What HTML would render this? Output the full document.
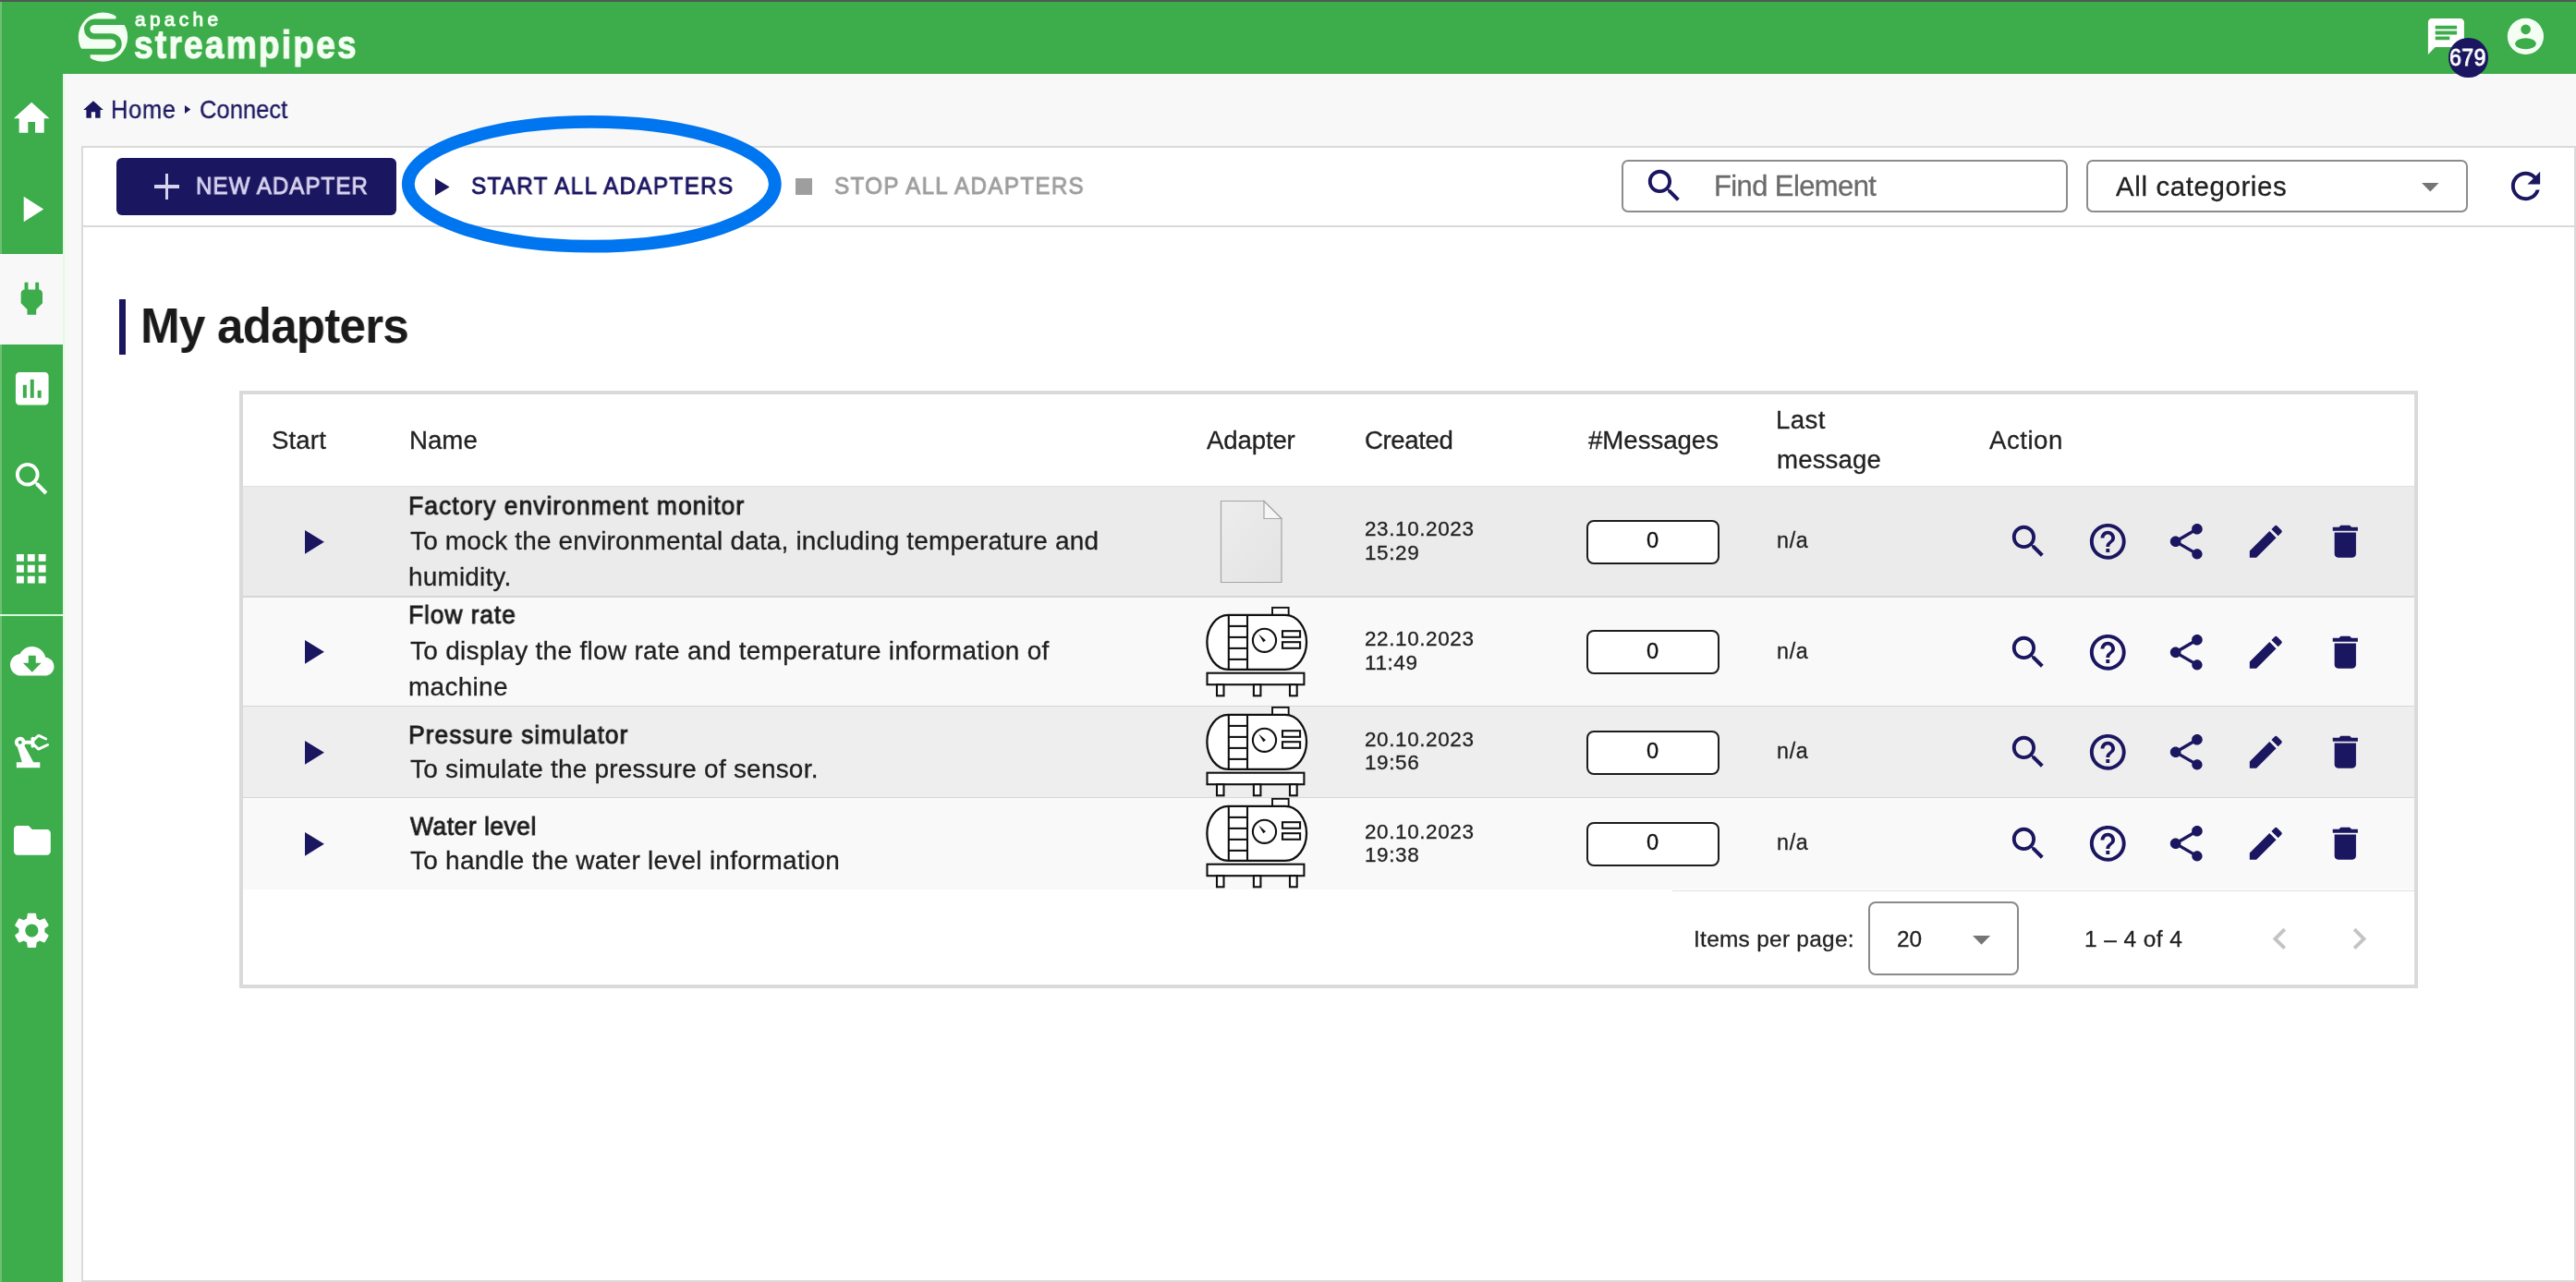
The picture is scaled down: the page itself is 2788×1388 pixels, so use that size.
<!DOCTYPE html>
<html><head><meta charset="utf-8"><style>
html,body{margin:0;padding:0;}
body{width:2788px;height:1388px;position:relative;overflow:hidden;background:#f8f8f8;font-family:"Liberation Sans",sans-serif;}
.t{position:absolute;white-space:nowrap;will-change:transform;}
.b{position:absolute;box-sizing:border-box;}
.ic{position:absolute;overflow:visible;}
</style></head><body>
<!-- header -->
<div class="b" style="left:0;top:0;width:2788px;height:80px;background:#3dac4a"></div>
<div class="b" style="left:0;top:0;width:2788px;height:2px;background:#4f5a52"></div>
<!-- sidebar -->
<div class="b" style="left:0;top:80px;width:68px;height:1308px;background:#3dac4a"></div>
<div class="b" style="left:0;top:2px;width:2px;height:1386px;background:#6cc074"></div>
<div class="b" style="left:0;top:275px;width:68px;height:98px;background:#f8f8f8"></div>
<div class="b" style="left:0;top:665px;width:68px;height:2px;background:#d4fcd8"></div>
<div class="b" style="left:68px;top:80px;width:1.5px;height:1308px;background:#e2fbe4"></div>
<!-- logo -->
<svg class="ic" style="left:80px;top:8px;width:64px;height:64px" viewBox="80 8 64 64">
 <circle cx="111.5" cy="40.1" r="26.7" fill="#f4fff4"/>
 <path d="M145 23.75 H101.7 A7.83 7.83 0 0 0 101.7 39.4 H120.3 A8.3 8.3 0 0 1 120.3 56 H78" fill="none" stroke="#3dac4a" stroke-width="6.3"/>
 <path d="M125.5 12 V21.6 H140 V12 Z M97.7 59 V70 H80 V59 Z" fill="#3dac4a"/>
</svg>
<svg class="ic" style="left:2709.7px;top:15.5px;width:46.8px;height:46.8px" viewBox="0 0 24 24">
 <circle cx="12" cy="12" r="10.05" fill="#f4fff4"/><circle cx="12.1" cy="8.1" r="2.75" fill="#3dac4a"/><ellipse cx="12.05" cy="16.05" rx="5.85" ry="3.1" fill="#3dac4a"/>
</svg>
<!-- card -->
<div class="b" style="left:88px;top:158px;width:2700px;height:1230px;background:#fff;border:2px solid #dadada"></div>
<div class="b" style="left:90px;top:244px;width:2696px;height:2px;background:#dadada"></div>
<!-- new adapter -->
<div class="b" style="left:125.7px;top:171px;width:303.8px;height:61.7px;border-radius:6px;background:#1b1660"></div>
<div class="b" style="left:166.7px;top:200.3px;width:27.3px;height:3.4px;background:#d6d3ef"></div>
<div class="b" style="left:178.7px;top:188px;width:3.4px;height:27.9px;background:#d6d3ef"></div>
<svg class="ic" style="left:471.2px;top:192.6px;width:15.6px;height:18.8px" viewBox="0 0 15.6 18.8"><path d="M0 0 V18.8 L15.6 9.4 Z" fill="#1b1660"/></svg>
<div class="b" style="left:861px;top:193px;width:17.6px;height:17.8px;background:#9e9e9e"></div>
<!-- search & select -->
<div class="b" style="left:1755px;top:173px;width:483px;height:57.2px;border:2px solid #8c8c8c;border-radius:7px"></div>
<div class="b" style="left:2258px;top:173px;width:413px;height:57.4px;border:2px solid #8c8c8c;border-radius:7px"></div>
<svg class="ic" style="left:2621px;top:198px;width:18.6px;height:9.4px" viewBox="0 0 18.6 9.4"><path d="M0 0 H18.6 L9.3 9.4 Z" fill="#757575"/></svg>
<!-- breadcrumb arrow -->
<svg class="ic" style="left:200.4px;top:114.4px;width:6.3px;height:9.1px" viewBox="0 0 6.3 9.1"><path d="M0 0 V9.1 L6.3 4.55 Z" fill="#1b1660"/></svg>
<!-- heading bar -->
<div class="b" style="left:129px;top:324px;width:7.2px;height:60px;background:#1b1660"></div>
<!-- table card -->
<div class="b" style="left:259px;top:423px;width:2358px;height:647px;background:#fff;border:4px solid #dadada"></div>
<div class="b" style="left:263px;top:526px;width:2350px;height:1px;background:#e0e0e0"></div>
<div class="b" style="left:263px;top:527px;width:2350px;height:119px;background:#ebebeb"></div>
<div class="b" style="left:263px;top:645px;width:2350px;height:2px;background:#d6d6d6"></div>
<svg class="ic" style="left:329.9px;top:573.65px;width:20.9px;height:25.7px" viewBox="0 0 20.9 25.7"><path d="M0 0 V25.7 L20.9 12.85 Z" fill="#1b1660"/></svg>
<div class="b" style="left:1717px;top:562.50px;width:143.7px;height:48px;background:#fff;border:2.2px solid #1c1c1c;border-radius:8px"></div>
<div class="b" style="left:263px;top:647px;width:2350px;height:118px;background:#f9f9f9"></div>
<div class="b" style="left:263px;top:764px;width:2350px;height:2px;background:#d6d6d6"></div>
<svg class="ic" style="left:329.9px;top:693.15px;width:20.9px;height:25.7px" viewBox="0 0 20.9 25.7"><path d="M0 0 V25.7 L20.9 12.85 Z" fill="#1b1660"/></svg>
<div class="b" style="left:1717px;top:682.00px;width:143.7px;height:48px;background:#fff;border:2.2px solid #1c1c1c;border-radius:8px"></div>
<div class="b" style="left:263px;top:765px;width:2350px;height:99px;background:#eeeeee"></div>
<div class="b" style="left:263px;top:863px;width:2350px;height:2px;background:#d6d6d6"></div>
<svg class="ic" style="left:329.9px;top:801.65px;width:20.9px;height:25.7px" viewBox="0 0 20.9 25.7"><path d="M0 0 V25.7 L20.9 12.85 Z" fill="#1b1660"/></svg>
<div class="b" style="left:1717px;top:790.50px;width:143.7px;height:48px;background:#fff;border:2.2px solid #1c1c1c;border-radius:8px"></div>
<div class="b" style="left:263px;top:864px;width:2350px;height:99px;background:#f9f9f9"></div>
<svg class="ic" style="left:329.9px;top:900.65px;width:20.9px;height:25.7px" viewBox="0 0 20.9 25.7"><path d="M0 0 V25.7 L20.9 12.85 Z" fill="#1b1660"/></svg>
<div class="b" style="left:1717px;top:889.50px;width:143.7px;height:48px;background:#fff;border:2.2px solid #1c1c1c;border-radius:8px"></div>
<div class="b" style="left:1810px;top:963.5px;width:2803px;height:1.5px;background:#e0e0e0;width:803px"></div>
<div class="b" style="left:2022.4px;top:976px;width:162.7px;height:79.6px;border:2px solid #8a8a8a;border-radius:8px"></div>
<svg class="ic" style="left:2135px;top:1013.4px;width:19.1px;height:9.7px" viewBox="0 0 19.1 9.7"><path d="M0 0 H19.1 L9.55 9.7 Z" fill="#757575"/></svg>
<svg class="ic" style="left:1321px;top:542px;width:67px;height:90px" viewBox="0 0 67 90">
<defs><linearGradient id="dg" x1="0" y1="0" x2="1" y2="1"><stop offset="0" stop-color="#ededed"/><stop offset="1" stop-color="#e3e3e3"/></linearGradient></defs>
<path d="M0.5 0.5 H47 L66 19.5 V88.5 H0.5 Z" fill="url(#dg)" stroke="#a6a6a6" stroke-width="1.2"/>
<path d="M47 0.5 V19.5 H66 Z" fill="#f6f6f6" stroke="#a6a6a6" stroke-width="1.2"/>
</svg>
<svg class="ic" style="left:1295px;top:649.6px;width:125px;height:110px" viewBox="0 0 125 110" fill="none" stroke="#111" stroke-width="2.3">
<rect x="82.05" y="7.85" width="17.6" height="9" fill="#fff" stroke-width="1.9"/>
<path d="M34.35 15.85 H96.05 A23 29.5 0 0 1 96.05 74.85 H34.35 A23 29.5 0 0 1 34.35 15.85 Z" fill="#fff"/>
<g stroke-width="2.1"><line x1="34.8" y1="16" x2="34.8" y2="75"/><line x1="55" y1="16" x2="55" y2="75"/>
<line x1="34.8" y1="27.9" x2="55" y2="27.9"/><line x1="34.8" y1="39.9" x2="55" y2="39.9"/><line x1="34.8" y1="51.9" x2="55" y2="51.9"/><line x1="34.8" y1="63.9" x2="55" y2="63.9"/>
<circle cx="73.5" cy="43.3" r="12.6"/>
<rect x="93" y="33.2" width="19.1" height="6.6"/>
<rect x="93" y="45.2" width="19.1" height="6.6"/>
<rect x="11.5" y="78.7" width="104.9" height="12.5" fill="#fff"/>
<rect x="22" y="91.2" width="7.5" height="12.1" fill="#fff"/>
<rect x="61.9" y="91.2" width="7.5" height="12.1" fill="#fff"/>
<rect x="101" y="91.2" width="7.7" height="12.1" fill="#fff"/></g>
<path d="M67.2 36.6 L72.3 45.2 L75 43.2 Z" fill="#111" stroke="none"/>
</svg>
<svg class="ic" style="left:1295px;top:758.1px;width:125px;height:110px" viewBox="0 0 125 110" fill="none" stroke="#111" stroke-width="2.3">
<rect x="82.05" y="7.85" width="17.6" height="9" fill="#fff" stroke-width="1.9"/>
<path d="M34.35 15.85 H96.05 A23 29.5 0 0 1 96.05 74.85 H34.35 A23 29.5 0 0 1 34.35 15.85 Z" fill="#fff"/>
<g stroke-width="2.1"><line x1="34.8" y1="16" x2="34.8" y2="75"/><line x1="55" y1="16" x2="55" y2="75"/>
<line x1="34.8" y1="27.9" x2="55" y2="27.9"/><line x1="34.8" y1="39.9" x2="55" y2="39.9"/><line x1="34.8" y1="51.9" x2="55" y2="51.9"/><line x1="34.8" y1="63.9" x2="55" y2="63.9"/>
<circle cx="73.5" cy="43.3" r="12.6"/>
<rect x="93" y="33.2" width="19.1" height="6.6"/>
<rect x="93" y="45.2" width="19.1" height="6.6"/>
<rect x="11.5" y="78.7" width="104.9" height="12.5" fill="#fff"/>
<rect x="22" y="91.2" width="7.5" height="12.1" fill="#fff"/>
<rect x="61.9" y="91.2" width="7.5" height="12.1" fill="#fff"/>
<rect x="101" y="91.2" width="7.7" height="12.1" fill="#fff"/></g>
<path d="M67.2 36.6 L72.3 45.2 L75 43.2 Z" fill="#111" stroke="none"/>
</svg>
<svg class="ic" style="left:1295px;top:857.1px;width:125px;height:110px" viewBox="0 0 125 110" fill="none" stroke="#111" stroke-width="2.3">
<rect x="82.05" y="7.85" width="17.6" height="9" fill="#fff" stroke-width="1.9"/>
<path d="M34.35 15.85 H96.05 A23 29.5 0 0 1 96.05 74.85 H34.35 A23 29.5 0 0 1 34.35 15.85 Z" fill="#fff"/>
<g stroke-width="2.1"><line x1="34.8" y1="16" x2="34.8" y2="75"/><line x1="55" y1="16" x2="55" y2="75"/>
<line x1="34.8" y1="27.9" x2="55" y2="27.9"/><line x1="34.8" y1="39.9" x2="55" y2="39.9"/><line x1="34.8" y1="51.9" x2="55" y2="51.9"/><line x1="34.8" y1="63.9" x2="55" y2="63.9"/>
<circle cx="73.5" cy="43.3" r="12.6"/>
<rect x="93" y="33.2" width="19.1" height="6.6"/>
<rect x="93" y="45.2" width="19.1" height="6.6"/>
<rect x="11.5" y="78.7" width="104.9" height="12.5" fill="#fff"/>
<rect x="22" y="91.2" width="7.5" height="12.1" fill="#fff"/>
<rect x="61.9" y="91.2" width="7.5" height="12.1" fill="#fff"/>
<rect x="101" y="91.2" width="7.7" height="12.1" fill="#fff"/></g>
<path d="M67.2 36.6 L72.3 45.2 L75 43.2 Z" fill="#111" stroke="none"/>
</svg>
<svg class="ic" style="left:11.30px;top:105.20px;width:46.40px;height:46.40px" viewBox="0 0 24 24"><path fill="#ffffff" d="M10 20v-6h4v6h5v-8h3L12 3 2 12h3v8z"/></svg>
<svg class="ic" style="left:10.10px;top:203.20px;width:47.00px;height:47.00px" viewBox="0 0 24 24"><path fill="#ffffff" d="M8 5v14l11-7z"/></svg>
<svg class="ic" style="left:10.50px;top:300.20px;width:46.70px;height:46.70px" viewBox="0 0 24 24"><path fill="#3dac4a" d="M16.01 7L16 3h-2v4h-4V3H8v4h-.01C7 6.99 6 7.99 6 8.99v5.49L9.5 18v3h5v-3l3.5-3.51v-5.5c0-1-1-2-1.99-1.99z"/></svg>
<svg class="ic" style="left:10.50px;top:397.40px;width:47.50px;height:47.50px" viewBox="0 0 24 24"><path fill="#ffffff" d="M19 3H5c-1.1 0-2 .9-2 2v14c0 1.1.9 2 2 2h14c1.1 0 2-.9 2-2V5c0-1.1-.9-2-2-2zM9 17H7v-7h2v7zm4 0h-2V7h2v10zm4 0h-2v-4h2v4z"/></svg>
<svg class="ic" style="left:10.50px;top:494.60px;width:47.30px;height:47.30px" viewBox="0 0 24 24"><path fill="#ffffff" d="M15.5 14h-.79l-.28-.27C15.41 12.59 16 11.11 16 9.5 16 5.910 13.09 3 9.5 3S3 5.91 3 9.5 5.91 16 9.5 16c1.61 0 3.09-.59 4.23-1.570l.27.28v.79l5 4.99L20.49 19l-4.99-5zm-6 0C7.01 14 5 11.99 5 9.5S7.01 5 9.5 5 14 7.01 14 9.5 11.99 14 9.5 14z"/></svg>
<svg class="ic" style="left:10.40px;top:592.10px;width:47.50px;height:47.50px" viewBox="0 0 24 24"><path fill="#ffffff" d="M4 8h4V4H4v4zm6 12h4v-4h-4v4zm-6 0h4v-4H4v4zm0-6h4v-4H4v4zm6 0h4v-4h-4v4zm6-10v4h4V4h-4zm-6 4h4V4h-4v4zm6 6h4v-4h-4v4zm0 6h4v-4h-4v4z"/></svg>
<svg class="ic" style="left:10.50px;top:691.80px;width:47.50px;height:47.50px" viewBox="0 0 24 24"><path fill="#ffffff" d="M19.35 10.04C18.67 6.59 15.64 4 12 4 9.11 4 6.6 5.64 5.35 8.04 2.34 8.36 0 10.91 0 14c0 3.310 2.69 6 6 6h13c2.76 0 5-2.24 5-5 0-2.64-2.05-4.78-4.65-4.96zM17 13l-5 5-5-5h3V9h4v4h3z"/></svg>
<svg class="ic" style="left:10.40px;top:789.60px;width:47.00px;height:47.00px" viewBox="0 0 24 24"><path fill="#ffffff" d="M19.93 8.21l-3.6 1.68L14 7.7V6.3l2.33-2.19 3.6 1.68c.38.18.82.01 1-.36.18-.38.01-.82-.36-1L16.65 2.6c-.38-.18-.83-.1-1.130.2l-1.74 1.6c-.18-.24-.46-.4-.78-.4-.55 0-1 .45-1 1v1H8.82C8.34 4.65 6.98 3.73 5.4 4.07c-1.16.25-2.15 1.25-2.36 2.43-.22 1.32.46 2.47 1.48 3.08L7.08 18H4v3h13v-3h-3.62L8.41 8.77c.17-.24.31-.49.41-.77H12v1c0 .55.45 1 1 1 .32 0 .6-.16.78-.4l1.74 1.6c.3.3.75.38 1.13.2l4.92-2.3c.37-.17.54-.62.36-1-.18-.37-.62-.54-1-.36zM6 8c-.55 0-1-.45-1-1s.45-1 1-1 1 .45 1 1-.45 1-1 1z"/></svg>
<svg class="ic" style="left:10.50px;top:886.00px;width:47.80px;height:47.80px" viewBox="0 0 24 24"><path fill="#ffffff" d="M10 4H4c-1.1 0-1.99.9-1.99 2L2 18c0 1.1.9 2 2 2h16c1.1 0 2-.9 2-2V8c0-1.1-.9-2-2-2h-8l-2-2z"/></svg>
<svg class="ic" style="left:10.90px;top:984.10px;width:46.80px;height:46.80px" viewBox="0 0 24 24"><path fill="#ffffff" d="M19.14 12.94c.04-.3.06-.61.06-.94 0-.32-.02-.64-.07-.94l2.03-1.58c.18-.14.23-.41.12-.61l-1.92-3.32c-.12-.22-.37-.29-.59-.22l-2.39.96c-.5-.38-1.03-.7-1.62-.94l-.36-2.54c-.04-.24-.24-.41-.48-.41h-3.84c-.24 0-.43.17-.47.41l-.36 2.54c-.59.24-1.13.57-1.62.94l-2.39-.96c-.22-.08-.47 0-.59.22L2.74 8.87c-.12.21-.08.47.12.61l2.03 1.58c-.05.3-.09.63-.09.94s.02.64.07.94l-2.03 1.58c-.18.14-.23.41-.12.61l1.92 3.32c.12.22.37.29.59.22l2.39-.96c.5.38 1.03.7 1.62.94l.36 2.54c.05.24.24.41.48.41h3.84c.24 0 .44-.17.47-.41l.36-2.54c.59-.24 1.13-.56 1.62-.94l2.39.96c.22.08.47 0 .59-.22l1.92-3.32c.12-.22.07-.47-.12-.61l-2.01-1.58zM12 15.6c-1.98 0-3.6-1.62-3.6-3.6s1.62-3.6 3.6-3.6 3.6 1.62 3.6 3.6-1.62 3.6-3.6 3.6z"/></svg>
<svg class="ic" style="left:2624.00px;top:16.00px;width:46.80px;height:46.80px" viewBox="0 0 24 24"><path fill="#ffffff" d="M20 2H4c-1.1 0-1.99.9-1.99 2L2 22l4-4h14c1.1 0 2-.9 2-2V4c0-1.1-.9-2-2-2zM6 9h12v2H6V9zm8 5H6v-2h8v2zm4-6H6V6h12v2z"/></svg>
<svg class="ic" style="left:88.00px;top:105.60px;width:26.00px;height:26.00px" viewBox="0 0 24 24"><path fill="#1b1660" d="M10 20v-6h4v6h5v-8h3L12 3 2 12h3v8z"/></svg>
<svg class="ic" style="left:1777.90px;top:178.20px;width:46.60px;height:46.60px" viewBox="0 0 24 24"><path fill="#1b1660" d="M15.5 14h-.79l-.28-.27C15.41 12.59 16 11.11 16 9.5 16 5.910 13.09 3 9.5 3S3 5.91 3 9.5 5.91 16 9.5 16c1.61 0 3.09-.59 4.23-1.570l.27.28v.79l5 4.99L20.49 19l-4.99-5zm-6 0C7.01 14 5 11.99 5 9.5S7.01 5 9.5 5 14 7.01 14 9.5 11.99 14 9.5 14z"/></svg>
<svg class="ic" style="left:2710.20px;top:178.30px;width:47.00px;height:47.00px" viewBox="0 0 24 24"><path fill="#1b1660" d="M17.65 6.35C16.2 4.9 14.21 4 12 4c-4.42 0-7.99 3.58-7.99 8s3.57 8 7.99 8c3.73 0 6.84-2.55 7.73-6h-2.08c-.82 2.33-3.04 4-5.65 4-3.31 0-6-2.69-6-6s2.69-6 6-6c1.66 0 3.14.69 4.22 1.78L13 11h7V4l-2.35 2.35z"/></svg>
<svg class="ic" style="left:2171.50px;top:563.20px;width:46.56px;height:46.56px" viewBox="0 0 24 24"><path fill="#1b1660" d="M15.5 14h-.79l-.28-.27C15.41 12.59 16 11.11 16 9.5 16 5.910 13.09 3 9.5 3S3 5.91 3 9.5 5.91 16 9.5 16c1.61 0 3.09-.59 4.23-1.570l.27.28v.79l5 4.99L20.49 19l-4.99-5zm-6 0C7.01 14 5 11.99 5 9.5S7.01 5 9.5 5 14 7.01 14 9.5 11.99 14 9.5 14z"/></svg>
<svg class="ic" style="left:2257.50px;top:563.40px;width:46.56px;height:46.56px" viewBox="0 0 24 24"><path fill="#1b1660" d="M11 18h2v-2h-2v2zm1-16C6.48 2 2 6.48 2 12s4.48 10 10 10 10-4.48 10-10S17.52 2 12 2zm0 18c-4.41 0-8-3.59-8-8s3.59-8 8-8 8 3.59 8 8-3.59 8-8 8zm0-14c-2.21 0-4 1.79-4 4h2c0-1.1.9-2 2-2s2 .9 2 2c0 2-3 1.75-3 5h2c0-2.25 3-2.5 3-5 0-2.21-1.79-4-4-4z"/></svg>
<svg class="ic" style="left:2343.20px;top:563.00px;width:46.56px;height:46.56px" viewBox="0 0 24 24"><path fill="#1b1660" d="M18 16.08c-.76 0-1.44.3-1.96.77L8.91 12.7c.05-.23.09-.46.09-.7s-.04-.47-.09-.7l7.05-4.11c.54.5 1.25.81 2.04.81 1.66 0 3-1.34 3-3s-1.34-3-3-3-3 1.34-3 3c0 .24.04.47.09.7L8.04 9.81C7.5 9.31 6.79 9 6 9c-1.66 0-3 1.34-3 3s1.34 3 3 3c.79 0 1.5-.31 2.04-.81l7.12 4.16c-.05.21-.08.43-.08.65 0 1.61 1.31 2.92 2.92 2.92 1.61 0 2.92-1.31 2.92-2.92s-1.310-2.92-2.92-2.92z"/></svg>
<svg class="ic" style="left:2428.60px;top:563.20px;width:46.56px;height:46.56px" viewBox="0 0 24 24"><path fill="#1b1660" d="M3 17.25V21h3.75L17.81 9.94l-3.75-3.75L3 17.25zM20.71 7.04c.39-.39.39-1.02 0-1.41l-2.34-2.34c-.39-.39-1.02-.39-1.41 0l-1.83 1.83 3.75 3.75 1.83-1.83z"/></svg>
<svg class="ic" style="left:2515.20px;top:563.20px;width:46.56px;height:46.56px" viewBox="0 0 24 24"><path fill="#1b1660" d="M6 19c0 1.1.9 2 2 2h8c1.1 0 2-.9 2-2V7H6v12zM19 4h-3.5l-1-1h-5l-1 1H5v2h14V4z"/></svg>
<svg class="ic" style="left:2171.50px;top:682.70px;width:46.56px;height:46.56px" viewBox="0 0 24 24"><path fill="#1b1660" d="M15.5 14h-.79l-.28-.27C15.41 12.59 16 11.11 16 9.5 16 5.910 13.09 3 9.5 3S3 5.91 3 9.5 5.91 16 9.5 16c1.61 0 3.09-.59 4.23-1.570l.27.28v.79l5 4.99L20.49 19l-4.99-5zm-6 0C7.01 14 5 11.99 5 9.5S7.01 5 9.5 5 14 7.01 14 9.5 11.99 14 9.5 14z"/></svg>
<svg class="ic" style="left:2257.50px;top:682.90px;width:46.56px;height:46.56px" viewBox="0 0 24 24"><path fill="#1b1660" d="M11 18h2v-2h-2v2zm1-16C6.48 2 2 6.48 2 12s4.48 10 10 10 10-4.48 10-10S17.52 2 12 2zm0 18c-4.41 0-8-3.59-8-8s3.59-8 8-8 8 3.59 8 8-3.59 8-8 8zm0-14c-2.21 0-4 1.79-4 4h2c0-1.1.9-2 2-2s2 .9 2 2c0 2-3 1.75-3 5h2c0-2.25 3-2.5 3-5 0-2.21-1.79-4-4-4z"/></svg>
<svg class="ic" style="left:2343.20px;top:682.50px;width:46.56px;height:46.56px" viewBox="0 0 24 24"><path fill="#1b1660" d="M18 16.08c-.76 0-1.44.3-1.96.77L8.91 12.7c.05-.23.09-.46.09-.7s-.04-.47-.09-.7l7.05-4.11c.54.5 1.25.81 2.04.81 1.66 0 3-1.34 3-3s-1.34-3-3-3-3 1.34-3 3c0 .24.04.47.09.7L8.04 9.81C7.5 9.31 6.79 9 6 9c-1.66 0-3 1.34-3 3s1.34 3 3 3c.79 0 1.5-.31 2.04-.81l7.12 4.16c-.05.21-.08.43-.08.65 0 1.61 1.31 2.92 2.92 2.92 1.61 0 2.92-1.31 2.92-2.92s-1.310-2.92-2.92-2.92z"/></svg>
<svg class="ic" style="left:2428.60px;top:682.70px;width:46.56px;height:46.56px" viewBox="0 0 24 24"><path fill="#1b1660" d="M3 17.25V21h3.75L17.81 9.94l-3.75-3.75L3 17.25zM20.71 7.04c.39-.39.39-1.02 0-1.41l-2.34-2.34c-.39-.39-1.02-.39-1.41 0l-1.83 1.83 3.75 3.75 1.83-1.83z"/></svg>
<svg class="ic" style="left:2515.20px;top:682.70px;width:46.56px;height:46.56px" viewBox="0 0 24 24"><path fill="#1b1660" d="M6 19c0 1.1.9 2 2 2h8c1.1 0 2-.9 2-2V7H6v12zM19 4h-3.5l-1-1h-5l-1 1H5v2h14V4z"/></svg>
<svg class="ic" style="left:2171.50px;top:791.20px;width:46.56px;height:46.56px" viewBox="0 0 24 24"><path fill="#1b1660" d="M15.5 14h-.79l-.28-.27C15.41 12.59 16 11.11 16 9.5 16 5.910 13.09 3 9.5 3S3 5.91 3 9.5 5.91 16 9.5 16c1.61 0 3.09-.59 4.23-1.570l.27.28v.79l5 4.99L20.49 19l-4.99-5zm-6 0C7.01 14 5 11.99 5 9.5S7.01 5 9.5 5 14 7.01 14 9.5 11.99 14 9.5 14z"/></svg>
<svg class="ic" style="left:2257.50px;top:791.40px;width:46.56px;height:46.56px" viewBox="0 0 24 24"><path fill="#1b1660" d="M11 18h2v-2h-2v2zm1-16C6.48 2 2 6.48 2 12s4.48 10 10 10 10-4.48 10-10S17.52 2 12 2zm0 18c-4.41 0-8-3.59-8-8s3.59-8 8-8 8 3.59 8 8-3.59 8-8 8zm0-14c-2.21 0-4 1.79-4 4h2c0-1.1.9-2 2-2s2 .9 2 2c0 2-3 1.75-3 5h2c0-2.25 3-2.5 3-5 0-2.21-1.79-4-4-4z"/></svg>
<svg class="ic" style="left:2343.20px;top:791.00px;width:46.56px;height:46.56px" viewBox="0 0 24 24"><path fill="#1b1660" d="M18 16.08c-.76 0-1.44.3-1.96.77L8.91 12.7c.05-.23.09-.46.09-.7s-.04-.47-.09-.7l7.05-4.11c.54.5 1.25.81 2.04.81 1.66 0 3-1.34 3-3s-1.34-3-3-3-3 1.34-3 3c0 .24.04.47.09.7L8.04 9.81C7.5 9.31 6.79 9 6 9c-1.66 0-3 1.34-3 3s1.34 3 3 3c.79 0 1.5-.31 2.04-.81l7.12 4.16c-.05.21-.08.43-.08.65 0 1.61 1.31 2.92 2.92 2.92 1.61 0 2.92-1.31 2.92-2.92s-1.310-2.92-2.92-2.92z"/></svg>
<svg class="ic" style="left:2428.60px;top:791.20px;width:46.56px;height:46.56px" viewBox="0 0 24 24"><path fill="#1b1660" d="M3 17.25V21h3.75L17.81 9.94l-3.75-3.75L3 17.25zM20.71 7.04c.39-.39.39-1.02 0-1.41l-2.34-2.34c-.39-.39-1.02-.39-1.41 0l-1.83 1.83 3.75 3.75 1.83-1.83z"/></svg>
<svg class="ic" style="left:2515.20px;top:791.20px;width:46.56px;height:46.56px" viewBox="0 0 24 24"><path fill="#1b1660" d="M6 19c0 1.1.9 2 2 2h8c1.1 0 2-.9 2-2V7H6v12zM19 4h-3.5l-1-1h-5l-1 1H5v2h14V4z"/></svg>
<svg class="ic" style="left:2171.50px;top:890.20px;width:46.56px;height:46.56px" viewBox="0 0 24 24"><path fill="#1b1660" d="M15.5 14h-.79l-.28-.27C15.41 12.59 16 11.11 16 9.5 16 5.910 13.09 3 9.5 3S3 5.91 3 9.5 5.91 16 9.5 16c1.61 0 3.09-.59 4.23-1.570l.27.28v.79l5 4.99L20.49 19l-4.99-5zm-6 0C7.01 14 5 11.99 5 9.5S7.01 5 9.5 5 14 7.01 14 9.5 11.99 14 9.5 14z"/></svg>
<svg class="ic" style="left:2257.50px;top:890.40px;width:46.56px;height:46.56px" viewBox="0 0 24 24"><path fill="#1b1660" d="M11 18h2v-2h-2v2zm1-16C6.48 2 2 6.48 2 12s4.48 10 10 10 10-4.48 10-10S17.52 2 12 2zm0 18c-4.41 0-8-3.59-8-8s3.59-8 8-8 8 3.59 8 8-3.59 8-8 8zm0-14c-2.21 0-4 1.79-4 4h2c0-1.1.9-2 2-2s2 .9 2 2c0 2-3 1.75-3 5h2c0-2.25 3-2.5 3-5 0-2.21-1.79-4-4-4z"/></svg>
<svg class="ic" style="left:2343.20px;top:890.00px;width:46.56px;height:46.56px" viewBox="0 0 24 24"><path fill="#1b1660" d="M18 16.08c-.76 0-1.44.3-1.96.77L8.91 12.7c.05-.23.09-.46.09-.7s-.04-.47-.09-.7l7.05-4.11c.54.5 1.25.81 2.04.81 1.66 0 3-1.34 3-3s-1.34-3-3-3-3 1.34-3 3c0 .24.04.47.09.7L8.04 9.81C7.5 9.31 6.79 9 6 9c-1.66 0-3 1.34-3 3s1.34 3 3 3c.79 0 1.5-.31 2.04-.81l7.12 4.16c-.05.21-.08.43-.08.65 0 1.61 1.31 2.92 2.92 2.92 1.61 0 2.92-1.31 2.92-2.92s-1.310-2.92-2.92-2.92z"/></svg>
<svg class="ic" style="left:2428.60px;top:890.20px;width:46.56px;height:46.56px" viewBox="0 0 24 24"><path fill="#1b1660" d="M3 17.25V21h3.75L17.81 9.94l-3.75-3.75L3 17.25zM20.71 7.04c.39-.39.39-1.02 0-1.41l-2.34-2.34c-.39-.39-1.02-.39-1.41 0l-1.83 1.83 3.75 3.75 1.83-1.83z"/></svg>
<svg class="ic" style="left:2515.20px;top:890.20px;width:46.56px;height:46.56px" viewBox="0 0 24 24"><path fill="#1b1660" d="M6 19c0 1.1.9 2 2 2h8c1.1 0 2-.9 2-2V7H6v12zM19 4h-3.5l-1-1h-5l-1 1H5v2h14V4z"/></svg>
<svg class="ic" style="left:2443.90px;top:993.40px;width:46.80px;height:46.80px" viewBox="0 0 24 24"><path fill="#c4c4c4" d="M15.41 7.41L14 6l-6 6 6 6 1.41-1.41L10.83 12z"/></svg>
<svg class="ic" style="left:2529.55px;top:993.40px;width:46.80px;height:46.80px" viewBox="0 0 24 24"><path fill="#c4c4c4" d="M10 6L8.59 7.41 13.17 12l-4.58 4.59L10 18l6-6z"/></svg>
<div class="b" style="left:2650px;top:41px;width:42.5px;height:42.5px;border-radius:50%;background:#1b1660"></div>
<div class="t" style="left:145.70px;top:7.08px;font-size:20.83px;line-height:27px;letter-spacing:4.330px;font-weight:400;-webkit-text-stroke:0.30px currentColor;-webkit-text-stroke:1.0px currentColor;color:#f4fff4">apache</div>
<div class="t" style="left:144.70px;top:20.93px;font-size:43.18px;line-height:54px;letter-spacing:2.538px;font-weight:700;-webkit-text-stroke:1.1px currentColor;color:#f4fff4;transform:scaleX(0.860);transform-origin:0 0">streampipes</div>
<div class="t" style="left:2651.00px;top:45.58px;font-size:25.73px;line-height:33px;letter-spacing:0.419px;font-weight:400;-webkit-text-stroke:0.90px currentColor;color:#ffffff;transform:scaleX(0.900);transform-origin:0 0">679</div>
<div class="t" style="left:119.80px;top:100.68px;font-size:27.47px;line-height:35px;letter-spacing:0.665px;font-weight:400;-webkit-text-stroke:0.30px currentColor;color:#1b1660;transform:scaleX(0.930);transform-origin:0 0">Home</div>
<div class="t" style="left:216.00px;top:100.68px;font-size:27.47px;line-height:35px;letter-spacing:0.007px;font-weight:400;-webkit-text-stroke:0.30px currentColor;color:#1b1660;transform:scaleX(0.930);transform-origin:0 0">Connect</div>
<div class="t" style="left:211.90px;top:184.88px;font-size:26.31px;line-height:33px;letter-spacing:1.063px;font-weight:400;-webkit-text-stroke:0.90px currentColor;color:#d6d3ef;transform:scaleX(0.920);transform-origin:0 0">NEW ADAPTER</div>
<div class="t" style="left:510.40px;top:184.88px;font-size:26.31px;line-height:33px;letter-spacing:1.478px;font-weight:400;-webkit-text-stroke:0.90px currentColor;color:#1b1660;transform:scaleX(0.920);transform-origin:0 0">START ALL ADAPTERS</div>
<div class="t" style="left:902.60px;top:185.18px;font-size:26.31px;line-height:33px;letter-spacing:1.453px;font-weight:400;-webkit-text-stroke:0.90px currentColor;color:#9e9e9e;transform:scaleX(0.920);transform-origin:0 0">STOP ALL ADAPTERS</div>
<div class="t" style="left:1855.40px;top:181.87px;font-size:30.96px;line-height:39px;letter-spacing:-0.589px;font-weight:400;-webkit-text-stroke:0.30px currentColor;color:#6b6b6b">Find Element</div>
<div class="t" style="left:2290.00px;top:183.02px;font-size:29.36px;line-height:37px;letter-spacing:0.649px;font-weight:400;-webkit-text-stroke:0.30px currentColor;color:#212121">All categories</div>
<div class="t" style="left:151.50px;top:318.30px;font-size:54.51px;line-height:69px;letter-spacing:-0.860px;font-weight:700;color:#1a1a1a;transform:scaleX(0.940);transform-origin:0 0">My adapters</div>
<div class="t" style="left:294.40px;top:458.63px;font-size:27.62px;line-height:35px;letter-spacing:0.141px;font-weight:400;-webkit-text-stroke:0.30px currentColor;color:#222222">Start</div>
<div class="t" style="left:442.50px;top:458.63px;font-size:27.62px;line-height:35px;letter-spacing:0.036px;font-weight:400;-webkit-text-stroke:0.30px currentColor;color:#222222">Name</div>
<div class="t" style="left:1305.70px;top:458.63px;font-size:27.62px;line-height:35px;letter-spacing:-0.151px;font-weight:400;-webkit-text-stroke:0.30px currentColor;color:#222222">Adapter</div>
<div class="t" style="left:1477.40px;top:458.63px;font-size:27.62px;line-height:35px;letter-spacing:-0.411px;font-weight:400;-webkit-text-stroke:0.30px currentColor;color:#222222">Created</div>
<div class="t" style="left:1718.80px;top:458.63px;font-size:27.62px;line-height:35px;letter-spacing:-0.023px;font-weight:400;-webkit-text-stroke:0.30px currentColor;color:#222222">#Messages</div>
<div class="t" style="left:1921.80px;top:437.13px;font-size:27.62px;line-height:35px;letter-spacing:0.428px;font-weight:400;-webkit-text-stroke:0.30px currentColor;color:#222222">Last</div>
<div class="t" style="left:1922.80px;top:479.53px;font-size:27.62px;line-height:35px;letter-spacing:0.154px;font-weight:400;-webkit-text-stroke:0.30px currentColor;color:#222222">message</div>
<div class="t" style="left:2152.90px;top:458.63px;font-size:27.62px;line-height:35px;letter-spacing:0.524px;font-weight:400;-webkit-text-stroke:0.30px currentColor;color:#222222">Action</div>
<div class="t" style="left:442.30px;top:529.02px;font-size:28.49px;line-height:36px;letter-spacing:1.077px;font-weight:400;-webkit-text-stroke:0.90px currentColor;color:#1c1c1c;transform:scaleX(0.930);transform-origin:0 0">Factory environment monitor</div>
<div class="t" style="left:444.30px;top:568.03px;font-size:27.91px;line-height:35px;letter-spacing:0.200px;font-weight:400;-webkit-text-stroke:0.30px currentColor;color:#1f1f1f">To mock the environmental data, including temperature and</div>
<div class="t" style="left:442.30px;top:606.93px;font-size:27.91px;line-height:35px;letter-spacing:0.200px;font-weight:400;-webkit-text-stroke:0.30px currentColor;color:#1f1f1f">humidity.</div>
<div class="t" style="left:1477.40px;top:558.49px;font-size:22.53px;line-height:29px;letter-spacing:0.582px;font-weight:400;-webkit-text-stroke:0.30px currentColor;color:#222222">23.10.2023</div>
<div class="t" style="left:1477.40px;top:583.79px;font-size:22.53px;line-height:29px;letter-spacing:0.582px;font-weight:400;-webkit-text-stroke:0.30px currentColor;color:#222222">15:29</div>
<div class="t" style="left:1782.30px;top:570.29px;font-size:23.69px;line-height:30px;letter-spacing:0.000px;font-weight:400;-webkit-text-stroke:0.30px currentColor;color:#111111">0</div>
<div class="t" style="left:1922.60px;top:570.42px;font-size:23.30px;line-height:30px;letter-spacing:0.692px;font-weight:400;-webkit-text-stroke:0.30px currentColor;color:#222222">n/a</div>
<div class="t" style="left:442.30px;top:647.42px;font-size:28.49px;line-height:36px;letter-spacing:0.920px;font-weight:400;-webkit-text-stroke:0.90px currentColor;color:#1c1c1c;transform:scaleX(0.930);transform-origin:0 0">Flow rate</div>
<div class="t" style="left:444.30px;top:686.83px;font-size:27.91px;line-height:35px;letter-spacing:0.335px;font-weight:400;-webkit-text-stroke:0.30px currentColor;color:#1f1f1f">To display the flow rate and temperature information of</div>
<div class="t" style="left:442.30px;top:725.73px;font-size:27.91px;line-height:35px;letter-spacing:0.335px;font-weight:400;-webkit-text-stroke:0.30px currentColor;color:#1f1f1f">machine</div>
<div class="t" style="left:1477.40px;top:677.39px;font-size:22.53px;line-height:29px;letter-spacing:0.582px;font-weight:400;-webkit-text-stroke:0.30px currentColor;color:#222222">22.10.2023</div>
<div class="t" style="left:1477.40px;top:702.69px;font-size:22.53px;line-height:29px;letter-spacing:0.582px;font-weight:400;-webkit-text-stroke:0.30px currentColor;color:#222222">11:49</div>
<div class="t" style="left:1782.30px;top:689.79px;font-size:23.69px;line-height:30px;letter-spacing:0.000px;font-weight:400;-webkit-text-stroke:0.30px currentColor;color:#111111">0</div>
<div class="t" style="left:1922.60px;top:689.92px;font-size:23.30px;line-height:30px;letter-spacing:0.692px;font-weight:400;-webkit-text-stroke:0.30px currentColor;color:#222222">n/a</div>
<div class="t" style="left:442.30px;top:776.72px;font-size:28.49px;line-height:36px;letter-spacing:1.047px;font-weight:400;-webkit-text-stroke:0.90px currentColor;color:#1c1c1c;transform:scaleX(0.930);transform-origin:0 0">Pressure simulator</div>
<div class="t" style="left:444.30px;top:814.83px;font-size:27.91px;line-height:35px;letter-spacing:0.254px;font-weight:400;-webkit-text-stroke:0.30px currentColor;color:#1f1f1f">To simulate the pressure of sensor.</div>
<div class="t" style="left:1477.40px;top:786.19px;font-size:22.53px;line-height:29px;letter-spacing:0.582px;font-weight:400;-webkit-text-stroke:0.30px currentColor;color:#222222">20.10.2023</div>
<div class="t" style="left:1477.40px;top:811.29px;font-size:22.53px;line-height:29px;letter-spacing:0.582px;font-weight:400;-webkit-text-stroke:0.30px currentColor;color:#222222">19:56</div>
<div class="t" style="left:1782.30px;top:798.29px;font-size:23.69px;line-height:30px;letter-spacing:0.000px;font-weight:400;-webkit-text-stroke:0.30px currentColor;color:#111111">0</div>
<div class="t" style="left:1922.60px;top:798.42px;font-size:23.30px;line-height:30px;letter-spacing:0.692px;font-weight:400;-webkit-text-stroke:0.30px currentColor;color:#222222">n/a</div>
<div class="t" style="left:444.30px;top:875.82px;font-size:28.49px;line-height:36px;letter-spacing:0.510px;font-weight:400;-webkit-text-stroke:0.90px currentColor;color:#1c1c1c;transform:scaleX(0.930);transform-origin:0 0">Water level</div>
<div class="t" style="left:444.30px;top:913.93px;font-size:27.91px;line-height:35px;letter-spacing:0.285px;font-weight:400;-webkit-text-stroke:0.30px currentColor;color:#1f1f1f">To handle the water level information</div>
<div class="t" style="left:1477.40px;top:885.69px;font-size:22.53px;line-height:29px;letter-spacing:0.582px;font-weight:400;-webkit-text-stroke:0.30px currentColor;color:#222222">20.10.2023</div>
<div class="t" style="left:1477.40px;top:910.69px;font-size:22.53px;line-height:29px;letter-spacing:0.582px;font-weight:400;-webkit-text-stroke:0.30px currentColor;color:#222222">19:38</div>
<div class="t" style="left:1782.30px;top:897.29px;font-size:23.69px;line-height:30px;letter-spacing:0.000px;font-weight:400;-webkit-text-stroke:0.30px currentColor;color:#111111">0</div>
<div class="t" style="left:1922.60px;top:897.42px;font-size:23.30px;line-height:30px;letter-spacing:0.692px;font-weight:400;-webkit-text-stroke:0.30px currentColor;color:#222222">n/a</div>
<div class="t" style="left:1832.50px;top:1001.03px;font-size:24.42px;line-height:31px;letter-spacing:0.286px;font-weight:400;-webkit-text-stroke:0.30px currentColor;color:#222222">Items per page:</div>
<div class="t" style="left:2052.80px;top:1001.03px;font-size:24.42px;line-height:31px;letter-spacing:-0.174px;font-weight:400;-webkit-text-stroke:0.30px currentColor;color:#222222">20</div>
<div class="t" style="left:2255.80px;top:1001.03px;font-size:24.42px;line-height:31px;letter-spacing:0.445px;font-weight:400;-webkit-text-stroke:0.30px currentColor;color:#222222">1 – 4 of 4</div>
<svg class="ic" style="left:0;top:0;width:2788px;height:1388px" viewBox="0 0 2788 1388"><ellipse cx="640.3" cy="199.3" rx="198.5" ry="67.4" fill="none" stroke="#0075f0" stroke-width="13.8"/></svg>
</body></html>
